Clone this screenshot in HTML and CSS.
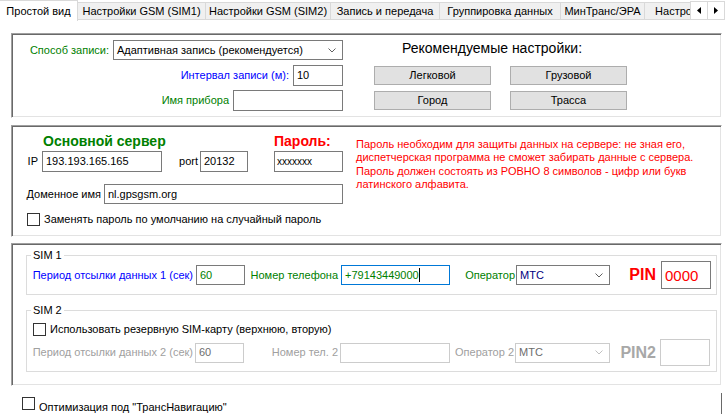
FILE: index.html
```html
<!DOCTYPE html>
<html lang="ru">
<head>
<meta charset="utf-8">
<title>Простой вид</title>
<link rel="stylesheet" href="styles.css">
</head>
<body>
<div class="tabbar">
  <div class="tabstrip">
    <div class="tab active w1">Простой вид</div>
    <div class="tab w2">Настройки GSM (SIM1)</div>
    <div class="tab w3">Настройки GSM (SIM2)</div>
    <div class="tab w4">Запись и передача</div>
    <div class="tab w5">Группировка данных</div>
    <div class="tab w6">МинТранс/ЭРА</div>
    <div class="tab w7">Настройки сервера</div>
  </div>
  <div class="scroller">
    <div class="sbtn"><svg width="4" height="7" viewBox="0 0 4 7"><polygon points="4,0 4,7 0,3.5" fill="#000"/></svg></div>
    <div class="sbtn sbtn2"><svg width="4" height="7" viewBox="0 0 4 7"><polygon points="0,0 0,7 4,3.5" fill="#000"/></svg></div>
  </div>
</div>

<div class="panel p1">
  <div class="p1-left">
    <div class="frow">
      <span class="green">Способ записи:</span>
      <div class="select sel-mode"><span>Адаптивная запись (рекомендуется)</span><svg width="8" height="5" viewBox="0 0 8 5"><polyline points="0.5,0.5 4,4 7.5,0.5" fill="none" stroke="#606060"/></svg></div>
    </div>
    <div class="frow r-int">
      <span class="blue">Интервал записи (м):</span>
      <div class="input in-int">10</div>
    </div>
    <div class="frow r-name">
      <span class="green">Имя прибора</span>
      <div class="input in-name"></div>
    </div>
  </div>
  <div class="p1-right">
    <div class="rec-title">Рекомендуемые настройки:</div>
    <div class="presets">
      <div class="btn">Легковой</div>
      <div class="btn">Грузовой</div>
      <div class="btn">Город</div>
      <div class="btn">Трасса</div>
    </div>
  </div>
</div>

<div class="panel p2">
  <div class="p2-left">
    <div class="p2-head">
      <span class="srv-title">Основной сервер</span>
      <span class="pwd-title">Пароль:</span>
    </div>
    <div class="p2-row r-ip">
      <span class="cell-ip">IP</span>
      <div class="input in-ip">193.193.165.165</div>
      <span class="cell-port">port</span>
      <div class="input in-port">20132</div>
      <div class="input in-pwd">xxxxxxx</div>
    </div>
    <div class="p2-row r-dom">
      <span class="cell-dom">Доменное имя</span>
      <div class="input in-dom">nl.gpsgsm.org</div>
    </div>
    <div class="chkrow r-chk">
      <span class="chk"></span>
      <span>Заменять пароль по умолчанию на случайный пароль</span>
    </div>
  </div>
  <div class="p2-note">Пароль необходим для защиты данных на сервере: не зная его,<br>диспетчерская программа не сможет забирать данные с сервера.<br>Пароль должен состоять из РОВНО 8 символов - цифр или букв<br>латинского алфавита.</div>
</div>

<div class="panel p3">
  <fieldset class="grp sim1">
    <legend>SIM 1</legend>
    <div class="simrow sim1row">
      <span class="rl pr3 blue">Период отсылки данных 1 (сек)</span>
      <div class="input h20 green">60</div>
      <span class="rl pr3 green">Номер телефона</span>
      <div class="input h20 focus green">+79143449000<span class="caret"></span></div>
      <span class="rl pr1 green">Оператор</span>
      <div class="select h20"><span class="navy">МТС</span><svg width="8" height="5" viewBox="0 0 8 5"><polyline points="0.5,0.5 4,4 7.5,0.5" fill="none" stroke="#606060"/></svg></div>
      <span class="rl pr5 pin">PIN</span>
      <div class="input pin-in">0000</div>
    </div>
  </fieldset>
  <fieldset class="grp sim2">
    <legend>SIM 2</legend>
    <div class="chkrow r-chk2">
      <span class="chk"></span>
      <span>Использовать резервную SIM-карту (верхнюю, вторую)</span>
    </div>
    <div class="simrow sim2row">
      <span class="rl pr2 dis">Период отсылки данных 2 (сек)</span>
      <div class="input h20 dis-in">60</div>
      <span class="rl pr2 dis">Номер тел. 2</span>
      <div class="input h20 dis-in"></div>
      <span class="rl pr1 dis">Оператор 2</span>
      <div class="select h20 dis-in"><span>МТС</span><svg width="8" height="5" viewBox="0 0 8 5"><polyline points="0.5,0.5 4,4 7.5,0.5" fill="none" stroke="#c0c0c0"/></svg></div>
      <span class="rl pr4 pin dis-pin">PIN2</span>
      <div class="input pin-in dis-in"></div>
    </div>
  </fieldset>
</div>

<div class="bottom">
  <span class="chk"></span>
  <span class="bottom-label">Оптимизация под "ТрансНавигацию"</span>
  <span class="vline"></span>
</div>
</body>
</html>
```
FILE: styles.css
```css
html, body {
  margin: 0;
  padding: 0;
}
body {
  width: 726px;
  height: 414px;
  overflow: hidden;
  background: #fff;
  color: #000;
  font-family: "Liberation Sans", Arial, sans-serif;
  font-size: 11px;
  line-height: 13px;
}

/* ---------- tabs ---------- */
.tabbar {
  display: flex;
  height: 21px;
}
.tabstrip {
  display: flex;
  flex: none;
  width: 690px;
  overflow: hidden;
}
.tab {
  flex: none;
  box-sizing: border-box;
  height: 18px;
  margin-top: 2px;
  border: 1px solid #d9d9d9;
  border-left: none;
  background: #f0f0f0;
  text-align: center;
  line-height: 16px;
  white-space: nowrap;
}
.tab.active {
  height: 21px;
  margin-top: 0;
  background: #fff;
  border-bottom: none;
  line-height: 20px;
}
.w1 { width: 78px; }
.w2 { width: 128px; }
.w3 { width: 125px; }
.w4 { width: 109px; }
.w5 { width: 121px; }
.w6 { width: 84px; }
.w7 { width: 120px; }
.scroller {
  display: flex;
  margin-top: 1px;
}
.sbtn {
  box-sizing: border-box;
  width: 18px;
  height: 19px;
  border: 1px solid #d9d9d9;
  background: #fff;
  display: flex;
  align-items: center;
  justify-content: center;
}
.sbtn2 {
  border-left: none;
  width: 17px;
}

/* ---------- common ---------- */
.green { color: #008000; }
.blue { color: #0000ff; }
.navy { color: #000080; }

.panel {
  box-sizing: border-box;
  margin-left: 11px;
  width: 711px;
  border: 1px solid;
  border-color: #a0a0a0 #ffffff #ffffff #a0a0a0;
  box-shadow: inset 1px 1px 0 #696969, inset -1px -1px 0 #e3e3e3;
}
.input {
  box-sizing: border-box;
  height: 21px;
  border: 1px solid #7a7a7a;
  background: #fff;
  padding: 0 3px;
  line-height: 19px;
  white-space: nowrap;
  overflow: hidden;
  display: flex;
  align-items: center;
}
.select {
  box-sizing: border-box;
  height: 20px;
  border: 1px solid #7a7a7a;
  background: #fff;
  display: flex;
  align-items: center;
  justify-content: space-between;
  padding: 0 6px 0 3px;
  white-space: nowrap;
}
.h20 { height: 20px; }
.chk {
  flex: none;
  box-sizing: border-box;
  width: 13px;
  height: 13px;
  border: 1px solid #333;
  background: #fff;
}
.chkrow {
  display: flex;
  align-items: center;
  gap: 4px;
  white-space: nowrap;
}

/* ---------- panel 1 ---------- */
.p1 {
  margin-top: 12px;
  height: 85px;
  display: flex;
  padding-top: 6px;
}
.p1-left {
  width: 331px;
  display: flex;
  flex-direction: column;
  align-items: flex-end;
}
.frow {
  display: flex;
  align-items: center;
  gap: 4px;
  white-space: nowrap;
}
.r-int { margin-top: 5px; }
.r-name { margin-top: 4px; }
.sel-mode { width: 230px; }
.in-int { width: 50px; }
.in-name { width: 110px; }
.p1-right {
  margin-left: 31px;
}
.rec-title {
  font-size: 14px;
  line-height: 16px;
  padding-left: 28px;
  white-space: nowrap;
}
.presets {
  display: grid;
  grid-template-columns: 117px 117px;
  column-gap: 19px;
  row-gap: 6px;
  margin-top: 10px;
}
.btn {
  box-sizing: border-box;
  height: 19px;
  background: #e1e1e1;
  border: 1px solid #adadad;
  text-align: center;
  line-height: 17px;
}

/* ---------- panel 2 ---------- */
.p2 {
  margin-top: 7px;
  height: 112px;
  display: flex;
}
.p2-left {
  width: 331px;
  flex: none;
}
.p2-head {
  display: flex;
  font-weight: bold;
  font-size: 14px;
  line-height: 16px;
  margin-top: 7px;
  white-space: nowrap;
}
.srv-title {
  color: #008000;
  margin-left: 31px;
}
.pwd-title {
  color: #ff0000;
  width: 69px;
  margin-left: auto;
}
.p2-row {
  display: flex;
  align-items: center;
  white-space: nowrap;
}
.r-ip { margin-top: 2px; height: 21px; }
.cell-ip {
  box-sizing: border-box;
  width: 30px;
  text-align: right;
  padding-right: 4px;
}
.in-ip { width: 120px; }
.cell-port {
  box-sizing: border-box;
  width: 38px;
  text-align: right;
  padding-right: 2px;
}
.in-port { width: 48px; }
.in-pwd {
  width: 69px;
  margin-left: auto;
  font-size: 10px;
  padding-left: 2px;
}
.r-dom { margin-top: 12px; height: 20px; }
.cell-dom {
  box-sizing: border-box;
  width: 92px;
  text-align: right;
  padding-right: 3px;
}
.in-dom { width: 239px; height: 20px; }
.r-chk {
  margin-top: 9px;
  margin-left: 15px;
}
.p2-note {
  margin-left: 13px;
  padding-top: 12px;
  color: #ff0000;
  line-height: 13.3px;
  white-space: nowrap;
}

/* ---------- panel 3 ---------- */
.p3 {
  margin-top: 6px;
  height: 143px;
  padding-left: 14px;
}
.grp {
  margin: 0;
  padding: 0 5px 5px 0;
  border: 1px solid #dcdcdc;
  width: 691px;
  box-sizing: border-box;
  min-width: 0;
}
.grp legend {
  margin-left: 4px;
  padding: 0 2px;
  line-height: 12px;
  font-size: 11px;
}
.sim1 { margin-top: 5px; }
.sim2 { margin-top: 9px; }
.simrow {
  display: grid;
  align-items: center;
  white-space: nowrap;
}
.sim1row {
  height: 28px;
  grid-template-columns: 169px 49px 96px 109px 66px 94px 51px 50px;
}
.sim2row {
  height: 27px;
  margin-top: 3px;
  grid-template-columns: 168px 49px 96px 110px 65px 95px 50px 50px;
}
.rl {
  box-sizing: border-box;
  text-align: right;
  overflow: visible;
}
.pr1 { padding-right: 1px; }
.pr2 { padding-right: 2px; }
.pr3 { padding-right: 3px; }
.pr4 { padding-right: 4px; }
.pr5 { padding-right: 5px; }
.focus { border-color: #0078d7; }
.caret {
  display: inline-block;
  width: 1px;
  height: 14px;
  background: #000;
  margin-left: 0;
}
.pin {
  font-weight: bold;
  font-size: 16px;
  line-height: 18px;
  color: #ff0000;
}
.pin-in {
  height: 28px;
  color: #ff0000;
  font-size: 15px;
  padding-left: 3px;
}
.sim1row .pin-in { height: 28px; }
.sim2row .pin-in { height: 27px; }
.r-chk2 {
  margin-top: 7px;
  margin-left: 6px;
}
.dis { color: #a0a0a0; }
.dis-pin { color: #a8a8a8; }
.dis-in {
  border-color: #cccccc;
  color: #6d6d6d;
}

/* ---------- bottom ---------- */
.bottom {
  display: flex;
  align-items: flex-start;
  margin-top: 7px;
  height: 21px;
}
.bottom .chk {
  margin: 4px 0 0 22px;
}
.bottom-label {
  margin: 8px 0 0 4px;
  white-space: nowrap;
}
.vline {
  margin-left: auto;
  margin-right: 4px;
  width: 1px;
  height: 21px;
  background: #696969;
}
```
